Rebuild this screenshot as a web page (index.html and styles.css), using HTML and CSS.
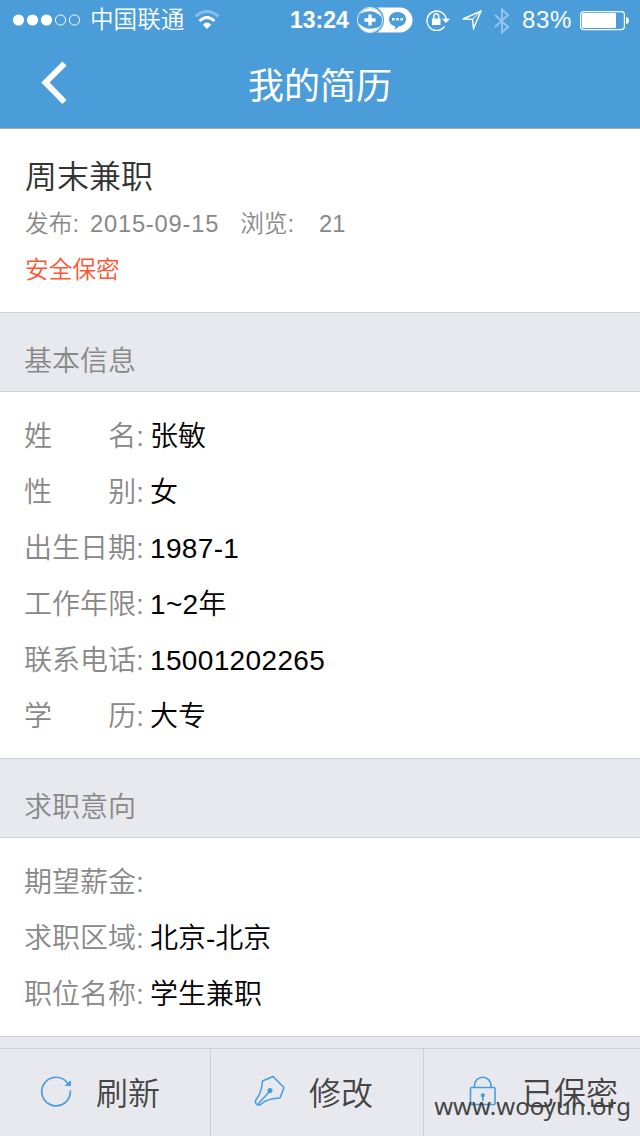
FILE: index.html
```html
<!DOCTYPE html>
<html lang="zh-CN">
  <head>
    <meta charset="utf-8">
    <title>我的简历</title>
    <link rel="stylesheet" href="styles.css">
  </head>
  <body>
    <header class="top">
      <div class="status-bar">
        <svg class="signal" width="70" height="14" viewBox="0 0 70 14">
          <g fill="#fff">
            <circle cx="6.500" cy="7" r="5.6" />
            <circle cx="20.500" cy="7" r="5.6" />
            <circle cx="34.500" cy="7" r="5.6" />
          </g>
          <g fill="none" stroke="#fff">
            <circle cx="48.500" cy="7" r="5.1" />
            <circle cx="62.500" cy="7" r="5.1" />
          </g>
        </svg>
        <span class="carrier">中国联通</span>
        <svg class="wifi" width="26" height="20" viewBox="0 0 26 20">
          <path d="M1.5 6.5Q13-3.5 24.5 6.5" fill="none" stroke="#fff" stroke-opacity=".35" stroke-width="2.8" />
          <path d="M5.5 11Q13 4 20.500 11" fill="none" stroke="#fff" stroke-width="2.8" />
          <path d="M13 19L8.800 14.700Q13 10.500 17.200 14.700Z" fill="#fff" />
        </svg>
        <span class="time">13:24</span>
        <svg class="assist" width="56" height="26" viewBox="0 0 56 26">
          <path d="M20 .5H43A12.500 12.500 0 0 1 43 25.500H20Q27 21 27 13T20 .5Z" fill="#fff" />
          <circle cx="13" cy="13" r="12.600" fill="#4b9dd9" stroke="#fff" stroke-width=".800" />
          <path d="M2.500 7Q9-1 17 1.500Q23 4 24.500 10Q18 3 10 4.500Q6 5 2.500 7ZM23.500 19Q17 27 9 24.500Q3 22 1.500 16Q8 23 16 21.500Q20 21 23.500 19Z" fill="#fff" />
          <path d="M13 7.500V18.500M7.500 13H18.500" stroke="#fff" stroke-width="3.400" />
          <path d="M40.500 5C45.500 5 49 8 49 12.200S45.500 19 42 19.300Q40.500 21.500 37 22.500Q38.500 21 38.300 19.200C34.500 18.500 32 15.800 32 12.200S35.500 5 40.500 5Z" fill="#4b9dd9" />
          <path d="M35 11h2.600v2.600H35zM39.200 11h2.600v2.600h-2.600zM43.400 11H46v2.600h-2.600z" fill="#fff" />
        </svg>
        <svg class="rotation" width="24" height="22" viewBox="0 0 24 22">
          <path d="M18.500 17.500A9.700 9.700 0 1 1 20.200 10" fill="none" stroke="#fff" stroke-width="1.400" />
          <path d="M16 9.700H24L20 14Z" fill="#fff" />
          <path d="M6 9.500H14.500V16H6Z" fill="#fff" />
          <path d="M7.800 10V7.500A2.450 2.700 0 0 1 12.700 7.500V10" fill="none" stroke="#fff" stroke-width="1.500" />
        </svg>
        <svg class="location" width="20" height="20" viewBox="0 0 20 20">
          <path d="M1 9L19 1L11.500 18.500L10.500 9.300Z" fill="none" stroke="#fff" stroke-width="1.400" />
          <path d="M10.500 9.300L19 1" stroke="#fff" />
        </svg>
        <svg class="bluetooth" width="16" height="28" viewBox="0 0 16 28">
          <path d="M1 8L14 20L8 25.500V2.500L14 8L1 20" fill="none" stroke="#fff" stroke-opacity=".4" stroke-width="2" />
        </svg>
        <span class="percent">83%</span>
        <svg class="battery" width="50" height="20" viewBox="0 0 50 20">
          <rect x=".6" y=".6" width="43.800" height="18" rx="3" fill="none" stroke="#fff" stroke-width="1.200" />
          <rect x="2" y="2" width="34" height="15" rx="1" fill="#fff" />
          <path d="M46 6Q49 6.500 49 9.600T46 13.200Z" fill="#fff" />
        </svg>
      </div>
      <div class="nav-bar">
        <svg class="back" width="28" height="44" viewBox="0 0 28 44">
          <path d="M24.500 2.500L5.500 21.500L24.500 41" fill="none" stroke="#fff" stroke-width="6" />
        </svg>
        <h1>我的简历</h1>
      </div>
    </header>

    <section class="summary">
      <h2>周末兼职</h2>
      <p class="meta">
        <span>发布:</span>
        <span class="date">2015-09-15</span>
        <span class="views">浏览:</span>
        <span>21</span>
      </p>
      <p class="secret">安全保密</p>
    </section>

    <h3 class="section-title">基本信息</h3>
    <dl class="info">
      <div class="row"><dt><span>姓</span><span>名:</span></dt><dd>张敏</dd></div>
      <div class="row"><dt><span>性</span><span>别:</span></dt><dd>女</dd></div>
      <div class="row"><dt>出生日期:</dt><dd class="number">1987-1</dd></div>
      <div class="row"><dt>工作年限:</dt><dd class="number">1~2年</dd></div>
      <div class="row"><dt>联系电话:</dt><dd class="number">15001202265</dd></div>
      <div class="row"><dt><span>学</span><span>历:</span></dt><dd>大专</dd></div>
    </dl>

    <h3 class="section-title">求职意向</h3>
    <dl class="info">
      <div class="row"><dt>期望薪金:</dt><dd></dd></div>
      <div class="row"><dt>求职区域:</dt><dd>北京-北京</dd></div>
      <div class="row"><dt>职位名称:</dt><dd>学生兼职</dd></div>
    </dl>

    <footer class="toolbar">
      <div class="tool refresh">
        <svg width="32" height="32" viewBox="0 0 32 32" fill="none" stroke="#459ddd">
          <path d="M30.300 15.500A14.300 14.300 0 1 1 27.500 8" stroke-width="1.700" />
          <path d="M30.500 6V10.500H25.500Z" fill="#459ddd" />
        </svg>
        <span>刷新</span>
      </div>
      <div class="tool edit">
        <svg width="32" height="32" viewBox="0 0 32 32" fill="none" stroke="#459ddd" stroke-width="1.500" stroke-linejoin="round">
          <path d="M8.500 6L19 1.500L30 12.500L26 23Q14 23 6.500 29.500Q4 31 2 28.500Q.5 26.500 2.500 24Q7.500 18 8.500 6Z" />
          <path d="M4 29L16 16" />
          <circle cx="16" cy="15.500" r="1.800" fill="#459ddd" />
        </svg>
        <span>修改</span>
      </div>
      <div class="tool lock">
        <svg width="28" height="30" viewBox="0 0 28 30" fill="none" stroke="#459ddd" stroke-width="1.600">
          <rect x="1.500" y="11.500" width="24.500" height="17" rx="1" />
          <path d="M5.500 11.500V9.500A8.200 8.200 0 0 1 22 9.500V11.500" />
          <path d="M13.800 19V25" />
          <circle cx="13.800" cy="19.300" r="1.300" fill="#459ddd" />
        </svg>
        <span>已保密</span>
      </div>
    </footer>
    <div class="watermark">www.wooyun.org</div>
  </body>
</html>
```

FILE: styles.css
```css
* {
  box-sizing: border-box;
}
body {
  margin: 0;
  width: 640px;
  height: 1136px;
  overflow: hidden;
  display: flex;
  flex-direction: column;
  background: #e8e9ee;
  color: #000;
  font-family: "Liberation Sans", "Noto Sans CJK SC", sans-serif;
  font-weight: 350;
}
h1, h2, h3, p, dl, dd {
  margin: 0;
  font-weight: 350;
}
svg {
  display: block;
  flex: none;
}
.top {
  height: 129px;
  background: #4b9dd9;
  border-bottom: 1px solid #a9abb0;
  color: #fff;
}
.status-bar {
  height: 40px;
  display: flex;
  align-items: center;
  padding-left: 12px;
  font-size: 24px;
  line-height: 42px;
  white-space: nowrap;
}
.carrier {
  width: 96px;
  margin-left: 8px;
  font-size: 23.6px;
}
.wifi {
  margin-left: 8px;
}
.time {
  width: 60px;
  margin-left: 70px;
  font-size: 23px;
  font-weight: bold;
}
.assist {
  margin: -1px 0 0 7px;
}
.rotation {
  margin-left: 13px;
}
.location {
  margin-left: 12px;
}
.bluetooth {
  margin: 1px 0 0 12px;
}
.percent {
  width: 52px;
  margin-left: 12px;
  letter-spacing: 0.7px;
}
.battery {
  margin: 1px 0 0 6px;
}
.nav-bar {
  height: 88px;
  display: grid;
  grid-template-columns: 80px 1fr 80px;
  align-items: center;
}
.back {
  margin: -3px 0 0 40px;
}
.nav-bar h1 {
  padding-top: 5px;
  font-size: 36px;
  font-weight: 400;
  line-height: 83px;
  text-align: center;
}
.summary {
  height: 183px;
  padding: 24px 25px 0;
  background: #fff;
}
.summary h2 {
  font-size: 32px;
  line-height: 48px;
  color: #333;
}
.meta {
  display: flex;
  font-size: 23.7px;
  line-height: 46px;
  color: #888;
}
.date {
  margin-left: 11px;
  letter-spacing: 0.8px;
}
.views {
  margin: 0 25px 0 21px;
}
.secret {
  font-size: 23.7px;
  line-height: 46px;
  color: #ff5533;
}
.section-title {
  height: 80px;
  padding: 10px 24px 0;
  border-top: 1px solid #cdcfdc;
  border-bottom: 1px solid #cdcfdc;
  font-size: 28px;
  line-height: 78px;
  color: #888;
}
.info {
  padding: 17px 24px 13px;
  background: #fff;
  font-size: 28px;
  line-height: 56px;
}
.info:nth-of-type(2) {
  border-bottom: 1px solid #cdcfdc;
}
.row {
  display: flex;
  height: 56px;
}
.row dt {
  width: 120px;
  display: flex;
  justify-content: space-between;
  color: #888;
}
.row dd {
  margin-left: 6px;
}
.row .number {
  letter-spacing: 0.35px;
}
.toolbar {
  height: 88px;
  margin-top: auto;
  display: grid;
  grid-template-columns: 211px 213px 216px;
  border-top: 1px solid #cdcfdc;
  color: #444;
  font-size: 32px;
}
.tool {
  display: flex;
  align-items: center;
  padding-bottom: 4px;
  border-right: 1px solid #cdcfdc;
}
.tool:last-child {
  border-right: 0;
}
.refresh {
  padding-left: 40px;
  gap: 24px;
}
.edit {
  padding-left: 43px;
  gap: 23px;
}
.lock {
  padding-left: 45px;
  gap: 25px;
}
.watermark {
  position: absolute;
  right: 9px;
  bottom: 14px;
  font-family: "Noto Sans", sans-serif;
  font-size: 24px;
  font-weight: 400;
  line-height: 32px;
  color: #444;
}
```
